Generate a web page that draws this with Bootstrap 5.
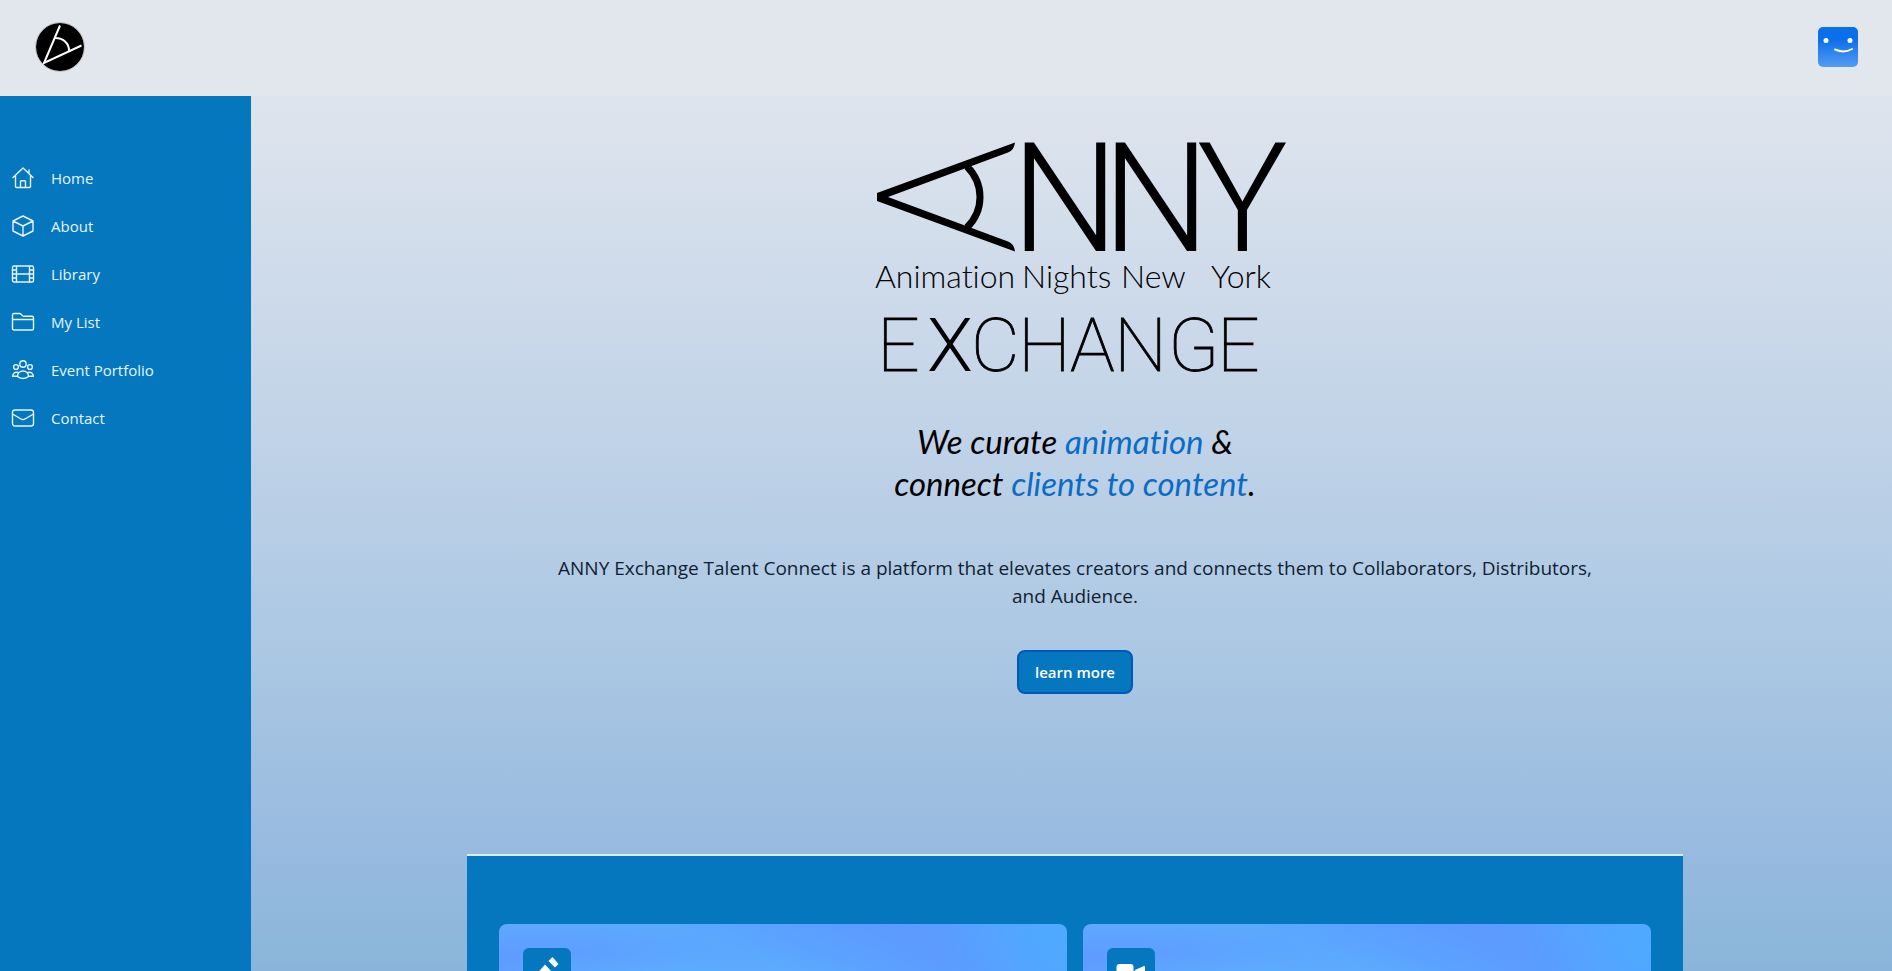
<!DOCTYPE html>
<html lang="en">
<head>
<meta charset="utf-8">
<meta name="viewport" content="width=device-width, initial-scale=1">
<title>ANNY Exchange</title>
<link href="https://cdn.jsdelivr.net/npm/bootstrap@5.3.0/dist/css/bootstrap.min.css" rel="stylesheet">
<style>
  :root { --brand: #0477bf; --brand-edge: #0456b8; }
  body {
    font-family: "Open Sans", "Noto Sans", sans-serif;
    background: linear-gradient(#e2e8f0 0, #dce3ed 13%, #c3d4e8 42%, #acc8e3 66%, #97badf 88%, #8ab5da 100%) fixed;
  }
  .topbar { height: 96px; padding: 0 34px 2px 36px; background: #e2e7ee; }
  .brand-mark { width: 48px; height: 48px; overflow: visible; }
  .avatar { width: 40px; height: 40px; }
  .side { width: 251px; padding-top: 58px; background: var(--brand); }
  .side a { height: 48px; padding: 0 11px; gap: 16px; color: #e8f4fc; font-size: 15px; }
  .side svg { width: 24px; height: 24px; }
  .outline { fill: none; stroke: currentColor; stroke-width: 1.4; stroke-linecap: round; stroke-linejoin: round; }
  .page { padding-left: 7px; overflow-y: auto; scrollbar-width: none; }
  .page::-webkit-scrollbar { display: none; }
  .wordmark { width: 410px; height: 245px; margin-top: 39px; overflow: visible; }
  .wm-large { font: 300 152px Roboto, sans-serif; }
  .wm-small { font: 300 32px Lato, sans-serif; font-variant-ligatures: none; }
  .wm-caps { font: 100 75px Roboto, sans-serif; stroke: #000; stroke-width: .8px; }
  .wm-caps .heavy { font-weight: 300; stroke: none; }
  .tagline { font: italic 400 33px/42px Lato, sans-serif; font-variant-ligatures: none; margin-top: 40px; color: #000; }
  .tagline span { color: #0b6cc4; }
  .intro { max-width: 1056px; font-size: 19px; line-height: 28px; margin-top: 50px; color: #0f1f33; }
  .btn-brand {
    --bs-btn-color: #fff; --bs-btn-bg: var(--brand); --bs-btn-border-color: var(--brand-edge);
    --bs-btn-hover-color: #fff; --bs-btn-hover-bg: var(--brand-edge); --bs-btn-hover-border-color: var(--brand-edge);
    --bs-btn-border-width: 2px; --bs-btn-border-radius: 8px; --bs-btn-font-size: 15px; --bs-btn-font-weight: 600;
    --bs-btn-padding-x: 16px; --bs-btn-line-height: 24px; --bs-btn-padding-y: 8px; margin-top: 40px;
  }
  .services { max-width: 1216px; margin-top: 160px; padding: 68px 32px; background: var(--brand); border-top: 2px solid #dcecf8; }
  .tile {
    height: 260px; padding: 24px; border-radius: 8px;
    background:
      radial-gradient(ellipse 130px 200px at 100% 0, #4eabff, transparent),
      radial-gradient(ellipse 220px 46px at 31% 66px, #5abefc 0, rgba(92, 173, 255, .7) 50%, transparent 100%),
      linear-gradient(24deg, transparent 52%, #5ba8ff 66%, #5c9aff 84%, #58a2ff 100%),
      linear-gradient(#5fa8ff, #5e9cff 30px, #5e9cff);
  }
  .tile-icon { width: 48px; height: 48px; border-radius: 6px; background: var(--brand); }
</style>
</head>
<body>
<div class="d-flex flex-column vh-100">
  <header class="topbar d-flex align-items-center justify-content-between flex-shrink-0">
    <a href="#" aria-label="ANNY home" class="d-flex">
      <svg class="brand-mark" viewBox="0 0 48 48" aria-hidden="true">
        <circle cx="24" cy="24" r="24" fill="#000"/>
        <circle cx="24" cy="24" r="24.500" fill="none" stroke="#a6a9ad" stroke-width=".6"/>
        <path d="M24 2.500 8 40 45.500 22.500M19.500 15C27 15 33 20 33 27.500" fill="none" stroke="#fff" stroke-width="2"/>
      </svg>
    </a>
    <a href="#" aria-label="Your profile" class="d-flex">
      <svg class="avatar" viewBox="0 0 40 40" aria-hidden="true">
        <defs><linearGradient id="face" x2="0" y2="1"><stop offset=".3" stop-color="#0a6fea"/><stop offset="1" stop-color="#559bf0"/></linearGradient></defs>
        <rect width="40" height="40" rx="5" fill="url(#face)"/>
        <circle cx="8" cy="13.500" r="2.500" fill="#fff"/><circle cx="32" cy="13.500" r="2.500" fill="#fff"/>
        <path d="M17 22.500q9 4 17-.500" fill="none" stroke="#fff" stroke-width="2" stroke-linecap="round"/>
      </svg>
    </a>
  </header>

  <div class="d-flex flex-grow-1 overflow-hidden">
    <nav class="side flex-shrink-0" aria-label="Main">
      <ul class="list-unstyled mb-0">
        <li><a href="#" class="d-flex align-items-center text-decoration-none">
          <svg class="outline" viewBox="0 0 24 24"><path d="M2 11.500 12 2l10 9.500M4.500 9.500V20.500q0 1 1 1h13q1 0 1-1V9.500M9.500 21.500v-6q0-.800.800-.800h3.400q.800 0 .800.800v6M18 7V4"/></svg>Home</a></li>
        <li><a href="#" class="d-flex align-items-center text-decoration-none">
          <svg class="outline" viewBox="0 0 24 24"><path d="M12 2 22 7v10l-10 5L2 17V7zM2 7l10 5 10-5M12 12v10"/></svg>About</a></li>
        <li><a href="#" class="d-flex align-items-center text-decoration-none">
          <svg class="outline" viewBox="0 0 24 24"><rect x="1.500" y="4" width="21" height="16" rx="1.500"/><path d="M5.500 4v16M18.500 4v16M5.500 12h13M1.500 8h4M1.500 12h4M1.500 16h4M18.500 8h4M18.500 12h4M18.500 16h4"/></svg>Library</a></li>
        <li><a href="#" class="d-flex align-items-center text-decoration-none">
          <svg class="outline" viewBox="0 0 24 24"><path d="M1.500 18.500V5q0-1.500 1.500-1.500h5.500q.7 0 1.300.6l1.700 1.700q.6.500 1.300.5H21q1.500 0 1.500 1.500v10.700q0 1.500-1.500 1.500H3q-1.500 0-1.500-1.500zM1.500 9.500h21"/></svg>My List</a></li>
        <li><a href="#" class="d-flex align-items-center text-decoration-none">
          <svg class="outline" viewBox="0 0 24 24"><circle cx="12" cy="6" r="3.200"/><circle cx="5" cy="9" r="2.400"/><circle cx="19" cy="9" r="2.400"/><path d="M6.500 18.500c0-3.500 2.500-5.500 5.500-5.500s5.500 2 5.500 5.500c-2.500 2.600-8.500 2.600-11 0zM6.800 14.500C4 13.500 1.800 15.500 1.600 18.300H6.500M17.200 14.500c2.800-1 5 1 5.200 3.800H17.500"/></svg>Event Portfolio</a></li>
        <li><a href="#" class="d-flex align-items-center text-decoration-none">
          <svg class="outline" viewBox="0 0 24 24"><rect x="1.500" y="4" width="21" height="16" rx="2.500"/><path d="M1.500 8l8.500 5q2 1.200 4 0l8.500-5"/></svg>Contact</a></li>
      </ul>
    </nav>

    <main class="page flex-grow-1 d-flex flex-column align-items-center text-center">
      <svg class="wordmark flex-shrink-0" viewBox="0 0 410 245" role="img" aria-label="ANNY, Animation Nights New York, Exchange">
        <path d="M7 58 145 7.500q-1 8-7 10L18 62l120 44.500q6 2 7 10L7 66z"/>
        <path d="M97 31.500q13 13 13 30.500t-13 30.500" fill="none" stroke="#000" stroke-width="7"/>
        <text class="wm-large" y="115.500" x="141 232 327">NNY</text>
        <text class="wm-small" y="153" x="5">Animation</text>
        <text class="wm-small" y="153" x="152">Nights</text>
        <text class="wm-small" y="153" x="251">New</text>
        <text class="wm-small" y="153" x="341">York</text>
        <text class="wm-caps" y="236" x="7 57 101 148 200 244 298 347">E<tspan class="heavy">X</tspan>CHANGE</text>
      </svg>
      <h1 class="tagline mb-0">We curate <span>animation</span> &amp;<br>connect <span>clients to content</span>.</h1>
      <p class="intro mb-0">ANNY Exchange Talent Connect is a platform that elevates creators and connects them to Collaborators, Distributors, and Audience.</p>
      <button type="button" class="btn btn-brand flex-shrink-0">learn more</button>
      <section class="services w-100">
        <div class="row g-3">
          <div class="col-6"><div class="tile"><div class="tile-icon d-flex align-items-center justify-content-center">
            <svg width="32" height="32" viewBox="0 0 32 32" fill="#fff" aria-hidden="true"><path d="m14 8.500 7.500 8L10 28H3v-7zM17.500 5l4-4 6 7-3.500 3.500z"/></svg>
          </div></div></div>
          <div class="col-6"><div class="tile"><div class="tile-icon d-flex align-items-center justify-content-center">
            <svg width="32" height="32" viewBox="0 0 32 32" fill="#fff" aria-hidden="true"><rect x="1.500" y="8" width="17" height="17" rx="3"/><path d="m20 14 9-4q1 0 1 1v12q0 1-1 1l-9-5z"/></svg>
          </div></div></div>
        </div>
      </section>
    </main>
  </div>
</div>
<script src="https://cdn.jsdelivr.net/npm/bootstrap@5.3.0/dist/js/bootstrap.bundle.min.js"></script>
</body>
</html>
